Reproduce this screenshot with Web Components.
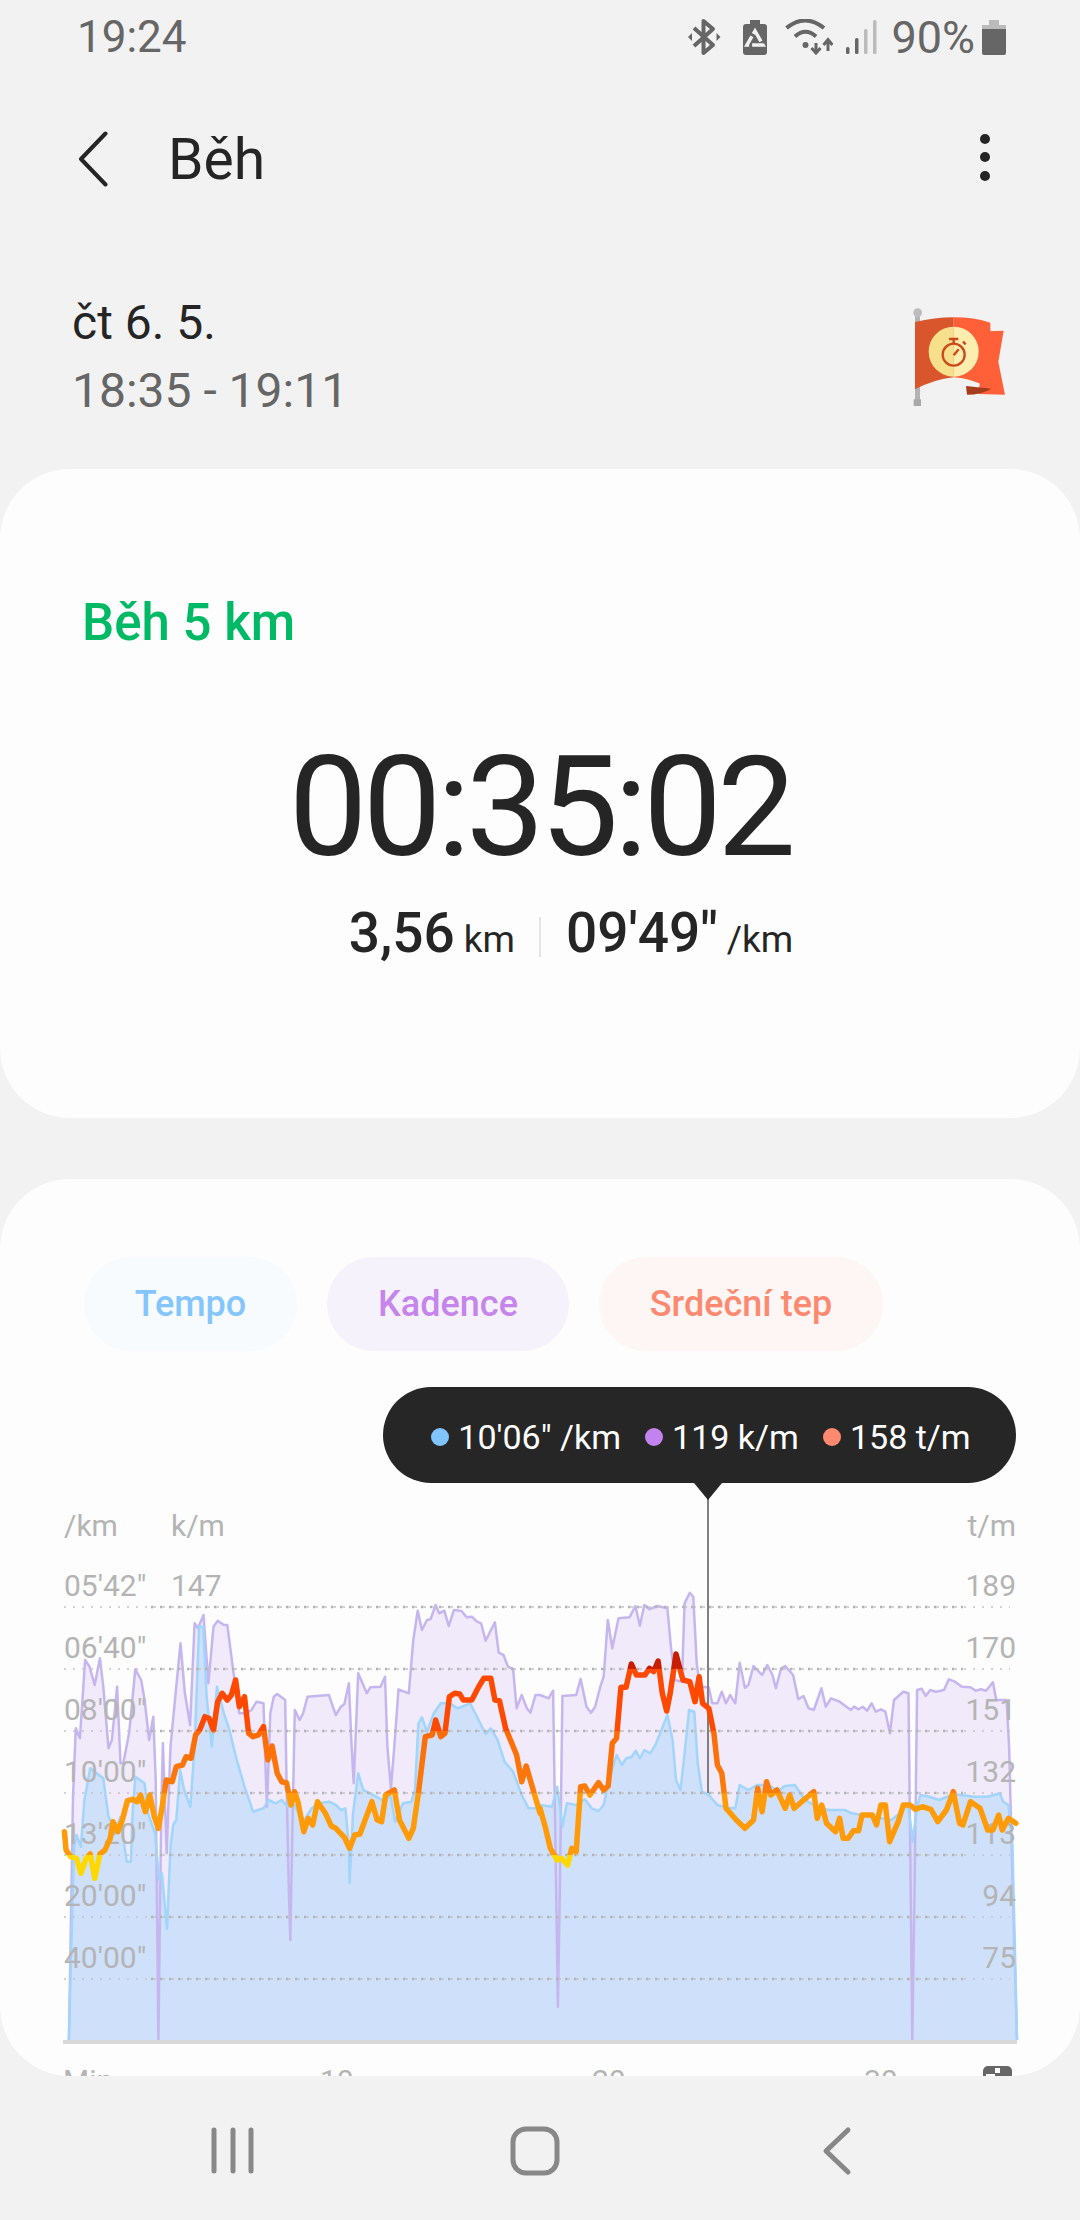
<!DOCTYPE html>
<html lang="cs">
<head>
<meta charset="UTF-8">
<meta name="viewport" content="width=device-width, initial-scale=1.0">
<title>Běh</title>
<style>
  html, body { margin: 0; height: 2220px; overflow: hidden; background: #f2f2f2; font-family: Roboto, "Noto Sans", sans-serif; }
  body { display: flex; flex-direction: column; }
</style>
</head>
<body>

<status-bar></status-bar>
<app-header>Běh</app-header>
<session-info></session-info>
<page-main>
  <result-card></result-card>
  <chart-card>
    <legend-pill style="--fg:#84c6fc;--bg:#f7fbfe;--w:213px">Tempo</legend-pill>
    <legend-pill style="--fg:#c585eb;--bg:#f5f2fc;--w:242px">Kadence</legend-pill>
    <legend-pill style="--fg:#fd8a70;--bg:#fdf6f5;--w:284px">Srdeční tep</legend-pill>
    <run-chart slot="chart">
      <chart-tooltip></chart-tooltip>
    </run-chart>
  </chart-card>
</page-main>
<nav-bar></nav-bar>

<script>
  function el(name, css, html) {
    customElements.define(name, class extends HTMLElement {
      constructor() {
        super();
        this.attachShadow({mode: 'open'}).innerHTML = '<style>' + css + '</style>' + html;
      }
    });
  }

  el('status-bar', `
    :host { display: flex; align-items: center; height: 74px; padding: 0 74px 0 77px; color: #666; font-size: 45px; flex: none; }
    .time { flex: 1; font-size: 44px; }
    svg { display: block; flex: none; }
  `, `
    <span class="time">19:24</span>
    <svg width="33" height="38" viewBox="0 0 33 38" style="margin-right:22px">
      <path d="M6 10 L25 27 L15.5 35 V3 L25 11 L6 28" fill="none" stroke="#666" stroke-width="4" stroke-linejoin="round"/>
      <path d="M0 19 L4 15 V23 Z M32.500 19 L28.500 15 V23 Z" fill="#666"/>
    </svg>
    <svg width="24" height="35" viewBox="0 0 24 35" style="margin-right:18px">
      <path d="M7 0 H17 V4 H21 Q24 4 24 7 V32 Q24 35 21 35 H3 Q0 35 0 32 V7 Q0 4 3 4 H7 Z" fill="#666"/>
      <path d="M12 11 L20 25 H4 Z" fill="none" stroke="#f2f2f2" stroke-width="3.500" stroke-dasharray="12 3"/>
    </svg>
    <svg width="48" height="36" viewBox="0 0 48 36" style="margin-right:13px">
      <path d="M1.500 9 Q20 -6 39 9 M10 17.500 Q20.500 8 31 17.500" fill="none" stroke="#666" stroke-width="4"/>
      <circle cx="20.500" cy="26" r="3" fill="#666"/>
      <path d="M31 24 V33 M26.500 29 L31 34 L35.500 29 M43 32 V22 M38.500 26 L43 20.500 L47.500 26" fill="none" stroke="#666" stroke-width="3"/>
    </svg>
    <svg width="32" height="34" viewBox="0 0 32 34" style="margin-right:13px">
      <rect x="0" y="27" width="3.500" height="7" rx="1.500" fill="#666"/>
      <rect x="9" y="18" width="3.500" height="16" rx="1.500" fill="#666"/>
      <rect x="18" y="9" width="3.500" height="25" rx="1.500" fill="#bbb"/>
      <rect x="27" y="0" width="3.500" height="34" rx="1.500" fill="#bbb"/>
    </svg>
    <span>90%</span>
    <svg width="24" height="35" viewBox="0 0 24 35" style="margin-left:7px">
      <path d="M7 0 H17 V5 H24 V9 H0 V5 H7 Z" fill="#bbb"/>
      <path d="M0 9 H24 V33 Q24 35 22 35 H2 Q0 35 0 33 Z" fill="#666"/>
    </svg>
  `);

  el('app-header', `
    :host { display: flex; align-items: center; height: 170px; padding: 0 90px 0 78px; color: #252525; font-size: 57px; flex: none; }
    .back { margin-right: 60px; display: block; }
    .title { flex: 1; }
    .dots { width: 10px; display: flex; flex-direction: column; gap: 8.500px; margin-top: -4px; }
    .dots i { width: 10px; height: 10px; border-radius: 50%; background: #252525; }
  `, `
    <svg class="back" width="30" height="56" viewBox="0 0 30 56"><path d="M27.500 2.500 L3 28 L27.500 53.500" fill="none" stroke="#252525" stroke-width="4" stroke-linecap="round" stroke-linejoin="round"/></svg>
    <span class="title"><slot></slot></span>
    <span class="dots"><i></i><i></i><i></i></span>
  `);

  el('session-info', `
    :host { display: flex; align-items: center; padding: 45px 59px 44px 72px; flex: none; font-size: 48px; line-height: 68px; }
    .text { flex: 1; }
    .date { color: #252525; }
    .range { color: #666; }
    svg { display: block; }
  `, `
    <div class="text"><div class="date">čt 6. 5.</div><div class="range">18:35 - 19:11</div></div>
    <svg width="130" height="130" viewBox="0 0 390 390">
      <rect x="72" y="60" width="15" height="280" fill="#b4b4b4"/>
      <rect x="68" y="322" width="22" height="20" fill="#a8a8a8"/>
      <circle cx="80" cy="62" r="13" fill="#bcbcbc"/>
      <path d="M288 118 L338 116 L322 210 L342 308 L262 306 Z" fill="#ff6038"/>
      <path d="M225 282 L302 290 Q270 308 228 308 Z" fill="#a63c1c"/>
      <path d="M72 90 Q130 76 188 76 V256 Q130 262 72 292 Z" fill="#d9552c"/>
      <path d="M188 76 Q250 76 298 92 V290 Q240 258 188 256 Z" fill="#ff6038"/>
      <path d="M188 104 A75 75 0 0 0 188 254 Z" fill="#f7e08c"/>
      <path d="M188 104 A75 75 0 0 1 188 254 Z" fill="#fdeeb0"/>
      <circle cx="188" cy="188" r="33" fill="none" stroke="#c94a1a" stroke-width="7"/>
      <path d="M174 141 H202 M188 141 V155 M216 149 L224 157 M188 190 L203 172" fill="none" stroke="#c94a1a" stroke-width="7"/>
    </svg>
  `);

  el('page-main', `
    :host { display: flex; flex-direction: column; gap: 61px; flex: 1; min-height: 0; overflow: hidden; }
  `, `<slot></slot>`);

  el('result-card', `
    :host { display: block; height: 649px; box-sizing: border-box; padding-top: 125px; background: #fdfdfd; border-radius: 70px; flex: none; }
    h2 { margin: 0 0 0 82px; font-size: 51px; line-height: 58px; font-weight: 500; color: #00b965; }
    .clock { margin-top: 80px; text-align: center; font-size: 140px; line-height: 150px; letter-spacing: -4.700px; color: #252525; }
    .stats { display: flex; justify-content: center; align-items: baseline; margin-top: 21px; padding-left: 62px; color: #252525; line-height: 60px; font-weight: 500; font-size: 55px; }
    small { font-size: 37px; font-weight: 400; margin-left: 9px; }
    .sep { align-self: center; width: 2px; height: 40px; background: #e5e5e5; margin: 0 25px 0 24px; }
  `, `
    <h2>Běh 5 km</h2>
    <div class="clock">00:35:02</div>
    <div class="stats">
      <span>3,56</span><small>km</small><span class="sep"></span>
      <span>09'49"</span><small>/km</small>
    </div>
  `);

  el('chart-card', `
    :host { display: block; flex: 1; min-height: 0; box-sizing: border-box; padding-top: 78px; background: #fdfdfd; border-radius: 70px; overflow: hidden; }
    .pills { display: flex; gap: 30px; padding-left: 84px; }
  `, `
    <div class="pills"><slot></slot></div>
    <slot name="chart"></slot>
  `);

  el('legend-pill', `
    :host { display: flex; align-items: center; justify-content: center; width: var(--w); height: 94px; border-radius: 47px; background: var(--bg); color: var(--fg); font-size: 36px; font-weight: 500; }
  `, `<slot></slot>`);

  el('chart-tooltip', `
    :host { position: absolute; left: 383px; top: 7px; width: 633px; height: 96px; box-sizing: border-box; padding: 3px 0 0 3px; display: flex; align-items: center; justify-content: center; gap: 24px; background: #262626; border-radius: 48px; color: #fff; font-size: 34px; }
    :host::after { content: ""; position: absolute; left: 311px; top: 96px; border: solid transparent; border-width: 17px 14px 0; border-top-color: #262626; }
    span { display: flex; align-items: center; gap: 9px; }
    i { width: 18px; height: 18px; border-radius: 50%; }
  `, `
    <span><i style="background:#7fc4fd"></i>10'06" /km</span>
    <span><i style="background:#c283ee"></i>119 k/m</span>
    <span><i style="background:#ff8a70"></i>158 t/m</span>
  `);

  // traced from the reference, in crop coordinates of the left and right half
  const purpleL = [[200,1680],[212,950],[220,745],[232,775],[247,540],[260,560],[275,615],[290,535],[300,620],[315,805],[325,780],[340,620],[350,850],[358,850],[375,760],[393,568],[410,600],[420,660],[433,780],[445,710],[452,900],[460,1680],[468,1000],[473,790],[484,1120],[495,800],[510,640],[524,490],[537,640],[552,735],[565,430],[575,445],[591,405],[605,610],[620,440],[632,422],[650,435],[660,435],[672,530],[682,610],[695,700],[715,700],[730,690],[745,665],[765,670],[770,830],[775,980],[785,700],[795,650],[805,642],[828,660],[832,900],[838,1200],[843,1380],[850,1000],[856,690],[870,720],[880,700],[893,650],[955,645],[975,705],[990,680],[1000,672],[1013,610],[1020,780],[1027,910],[1040,580],[1065,640],[1075,622],[1105,620],[1118,590],[1125,800],[1135,925],[1145,800],[1157,628],[1187,640],[1200,480],[1213,392],[1225,450],[1240,420],[1250,418],[1265,375],[1275,400],[1290,392],[1303,438],[1318,390],[1340,393],[1355,412],[1370,410],[1385,425],[1397,430],[1410,482],[1437,427],[1448,518],[1462,525],[1475,560],[1490,567],[1500,685],[1515,645],[1530,685],[1540,698],[1555,645],[1568,645]];
  const purpleR = [[0,645],[25,655],[38,632],[45,1100],[52,1580],[58,1200],[65,648],[105,645],[118,597],[135,680],[148,698],[160,680],[175,620],[185,590],[197,420],[210,505],[228,415],[260,412],[277,378],[290,437],[303,375],[318,388],[340,378],[370,385],[380,500],[392,600],[412,605],[420,370],[435,338],[445,350],[455,550],[465,620],[490,622],[500,670],[515,670],[528,635],[540,670],[552,645],[567,670],[580,548],[595,623],[605,615],[620,558],[645,585],[660,555],[675,585],[685,625],[700,565],[712,558],[735,585],[750,658],[765,648],[780,685],[795,690],[817,625],[830,680],[845,655],[870,665],[890,680],[903,690],[912,680],[925,688],[937,680],[950,692],[963,670],[975,695],[990,688],[1003,695],[1016,760],[1028,660],[1055,635],[1070,640],[1075,1100],[1081,1680],[1088,1200],[1095,630],[1108,626],[1120,648],[1133,630],[1150,635],[1173,630],[1187,598],[1205,605],[1225,620],[1250,622],[1265,632],[1280,628],[1295,632],[1315,607],[1325,660],[1355,660],[1362,800],[1372,1200],[1385,1680]];
  const blueL = [[200,1680],[215,1100],[222,1065],[235,1100],[245,960],[262,865],[300,895],[315,1010],[335,1050],[350,1010],[368,1145],[380,1145],[385,1000],[393,890],[420,910],[430,1000],[450,1060],[462,1200],[470,1180],[485,1347],[495,1100],[503,1035],[512,1020],[523,870],[535,930],[553,980],[565,800],[578,440],[590,440],[600,650],[615,800],[630,620],[650,700],[665,745],[685,830],[710,920],[735,995],[765,985],[780,960],[800,970],[818,960],[835,980],[855,975],[880,1025],[905,985],[925,970],[955,965],[975,975],[990,990],[1003,985],[1013,1100],[1015,1209],[1025,1000],[1040,880],[1055,930],[1075,940],[1110,960],[1135,950],[1147,1025],[1170,970],[1195,965],[1205,930],[1215,730],[1225,712],[1240,755],[1260,700],[1280,670],[1305,670],[1330,685],[1365,670],[1385,710],[1410,762],[1425,745],[1445,780],[1465,845],[1490,875],[1515,945],[1535,985],[1568,985]];
  const blueR = [[0,975],[35,980],[50,920],[65,1040],[78,970],[105,975],[130,958],[150,985],[170,993],[185,975],[200,900],[222,825],[238,855],[250,835],[265,832],[278,812],[290,835],[303,810],[320,820],[335,795],[370,705],[385,780],[395,900],[408,930],[420,820],[433,690],[448,695],[458,850],[470,935],[490,945],[515,975],[545,983],[567,985],[580,915],[605,930],[630,915],[665,915],[690,935],[710,918],[740,915],[770,960],[810,985],[840,990],[885,990],[905,1000],[1020,1020],[1045,1000],[1060,975],[1070,985],[1078,1050],[1082,1085],[1095,980],[1105,945],[1130,950],[1160,960],[1200,942],[1260,950],[1300,950],[1335,940],[1345,965],[1360,975],[1372,1100],[1385,1680]];
  const beatL = [[187,1055],[192,1110],[205,1130],[222,1135],[235,1180],[250,1135],[262,1122],[275,1195],[290,1122],[305,1110],[320,1075],[328,1025],[342,1055],[355,1020],[370,962],[385,958],[398,965],[408,945],[422,995],[435,945],[448,1010],[460,1045],[470,985],[483,900],[500,905],[512,860],[530,855],[540,830],[555,835],[568,765],[580,750],[595,710],[607,715],[620,750],[632,665],[645,640],[660,660],[672,645],[684,600],[695,680],[710,650],[722,760],[735,770],[750,765],[765,740],[778,840],[790,798],[805,880],[818,905],[832,908],[845,975],[855,935],[865,965],[882,1055],[895,1015],[908,1035],[922,965],[945,1000],[962,1038],[975,1045],[1000,1072],[1015,1105],[1030,1065],[1045,1062],[1080,965],[1095,1020],[1108,1025],[1120,945],[1145,930],[1160,1020],[1187,1075],[1200,1045],[1215,940],[1235,770],[1255,765],[1265,720],[1280,770],[1292,760],[1305,650],[1320,640],[1335,642],[1345,660],[1370,660],[1390,620],[1405,595],[1425,595],[1437,660],[1450,662],[1468,745],[1500,825],[1515,905],[1528,858],[1568,1000]];
  const beatR = [[0,985],[15,1040],[30,1105],[50,1140],[62,1135],[80,1155],[92,1105],[105,1115],[118,920],[130,918],[145,945],[170,908],[185,930],[198,918],[210,790],[222,775],[235,622],[250,622],[265,552],[280,585],[305,585],[318,565],[330,575],[343,543],[355,640],[368,693],[378,640],[395,522],[415,600],[435,605],[450,665],[462,590],[472,670],[490,685],[505,760],[515,855],[528,880],[540,985],[570,1020],[595,1045],[620,1020],[632,925],[645,995],[658,905],[670,945],[688,930],[712,985],[725,945],[738,985],[760,965],[795,935],[805,1015],[818,975],[832,1030],[858,1055],[870,1015],[880,1075],[895,1075],[910,1052],[925,1052],[935,1005],[965,1005],[977,1035],[990,975],[1003,975],[1015,1085],[1040,1025],[1055,975],[1075,975],[1090,988],[1110,980],[1135,988],[1155,1025],[1180,990],[1200,935],[1218,1030],[1228,1035],[1250,965],[1278,985],[1300,1050],[1315,1050],[1332,1005],[1342,1050],[1360,1015],[1382,1030]];

  const toPx = (l, r) => l.map(p => [p[0] / 2.9037, 1480 + p[1] / 3])
    .concat(r.map(p => [540 + p[0] / 2.9037, 1480 + p[1] / 3]));
  const line = pts => pts.map((p, i) => (i ? 'L' : 'M') + p[0].toFixed(1) + ' ' + p[1].toFixed(1)).join(' ');

  const purple = toPx(purpleL, purpleR), blue = toPx(blueL, blueR), beat = toPx(beatL, beatR);
  const gridY = [1607, 1669, 1731, 1793, 1855, 1917, 1979];
  const leftAxis = [`05'42"`, `06'40"`, `08'00"`, `10'00"`, `13'20"`, `20'00"`, `40'00"`];
  const rightAxis = [189, 170, 151, 132, 113, 94, 75];

  const grid = gridY.map(y => `
    <path d="M64 ${y} H1010" stroke="#c4c4c4" stroke-width="1.500" stroke-dasharray="2 7"/>
    <path d="M151 ${y} H963" stroke="#b4b4b4" stroke-width="2.500" stroke-dasharray="2.500 6.500"/>`).join('');
  const labels = gridY.map((y, i) => `
    <text x="64" y="${y - 11}">${leftAxis[i]}</text>
    <text x="1016" y="${y - 11}" text-anchor="end">${rightAxis[i]}</text>`).join('');

  el('run-chart', `
    :host { display: block; position: relative; height: 696px; margin-top: 29px; }
    svg { display: block; }
    text { font-size: 30px; fill: #b4b4b4; }
  `, `
    <svg width="1080" height="696" viewBox="0 1380 1080 696">
      <defs>
        <linearGradient id="beat" gradientUnits="userSpaceOnUse" x1="0" y1="1607" x2="0" y2="1855">
          <stop offset="0.25" stop-color="#c81e00"/>
          <stop offset="0.25" stop-color="#ff4800"/>
          <stop offset="0.5" stop-color="#ff4800"/>
          <stop offset="0.5" stop-color="#fd6a08"/>
          <stop offset="0.75" stop-color="#fb7c0c"/>
          <stop offset="0.75" stop-color="#ff9a08"/>
          <stop offset="1" stop-color="#ff9a08"/>
          <stop offset="1" stop-color="#ffd800"/>
        </linearGradient>
      </defs>
      <path d="${line(purple)} Z" fill="#f0eafa"/>
      <path d="${line(blue)} Z" fill="#cfe0fa"/>
      <path d="${line(purple)}" fill="none" stroke="#c6b6ef" stroke-width="2.500" stroke-linejoin="round"/>
      <path d="${line(blue)}" fill="none" stroke="#a2d5fb" stroke-width="2.500" stroke-linejoin="round"/>
      ${grid}
      <rect x="63" y="2040" width="954" height="4" fill="#d8d8d8"/>
      <rect x="707" y="1498" width="2" height="295" fill="#808080"/>
      ${labels}
      <text x="64" y="1536">/km</text>
      <text x="171" y="1536">k/m</text>
      <text x="171" y="1596">147</text>
      <text x="1016" y="1536" text-anchor="end">t/m</text>
      <path d="${line(beat)}" fill="none" stroke="url(#beat)" stroke-width="5.500" stroke-linejoin="round" stroke-linecap="round"/>
      <text x="63" y="2091">Min</text>
      <text x="320" y="2091">10</text>
      <text x="592" y="2091">20</text>
      <text x="864" y="2091">30</text>
      <rect x="983" y="2066" width="29" height="29" rx="5" fill="#666"/>
      <rect x="995" y="2068" width="5" height="5" fill="#fdfdfd"/>
      <rect x="986" y="2074" width="9" height="3" fill="#fdfdfd"/>
    </svg>
    <slot></slot>
  `);

  el('nav-bar', `
    :host { display: block; height: 144px; flex: none; background: #f2f2f2; }
    svg { display: block; }
  `, `
    <svg width="1080" height="144" viewBox="0 2076 1080 144" fill="none" stroke="#888" stroke-linecap="round" stroke-linejoin="round">
      <path d="M214 2130 V2171 M233 2130 V2171 M251 2130 V2171" stroke-width="5"/>
      <rect x="513" y="2129" width="44" height="44" rx="13" stroke-width="5"/>
      <path d="M848 2130 L826 2151 L848 2172" stroke-width="5"/>
    </svg>
  `);
</script>
</body>
</html>
